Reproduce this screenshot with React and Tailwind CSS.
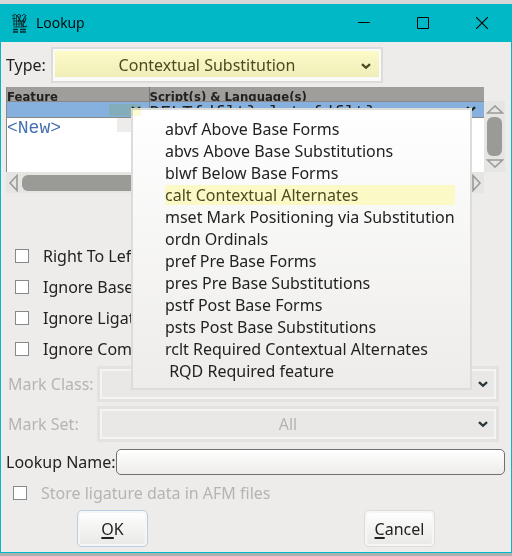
import React, { useState } from "react";

const features = [
  "abvf Above Base Forms",
  "abvs Above Base Substitutions",
  "blwf Below Base Forms",
  "calt Contextual Alternates",
  "mset Mark Positioning via Substitution",
  "ordn Ordinals",
  "pref Pre Base Forms",
  "pres Pre Base Substitutions",
  "pstf Post Base Forms",
  "psts Post Base Substitutions",
  "rclt Required Contextual Alternates",
  "\u00a0RQD Required feature",
];

const flags = [
  "Right To Left",
  "Ignore Base Glyphs",
  "Ignore Ligatures",
  "Ignore Combining Marks",
];

function Chevron({ className = "" }) {
  return (
    <svg viewBox="0 0 10 7" className={`h-[7px] w-[10px] ${className}`} aria-hidden="true">
      <path d="M1 1.2 L5 4.8 L9 1.2" fill="none" stroke="currentColor" strokeWidth="2.3" />
    </svg>
  );
}

function Checkbox({ id, disabled }) {
  return (
    <input
      id={id}
      type="checkbox"
      disabled={disabled}
      className="size-3.5 shrink-0 appearance-none border border-[#85898c] bg-white checked:bg-[#86b0dd]"
    />
  );
}

function DisabledSelect({ id, label, value }) {
  return (
    <div className="flex h-9 items-center pl-[7px] pr-3">
      <label htmlFor={id} className="w-[89px] shrink-0 text-[#b5b4b3]">{label}</label>
      <div className="relative h-full flex-1 border-3 border-[#e3e2e1]">
        <select
          id={id}
          disabled
          className="block size-full appearance-none border-2 border-[#f4f4f3] bg-[#e9e8e7] pr-5 text-center text-[#b5b4b3] opacity-100 [text-align-last:center]"
        >
          <option>{value}</option>
        </select>
        <Chevron className="pointer-events-none absolute right-2 top-3 text-[#2b343a]" />
      </div>
    </div>
  );
}

function AppIcon() {
  return (
    <svg viewBox="0 0 18 20" className="h-5 w-[18px]" fill="none" stroke="#092a2e" aria-hidden="true">
      <path d="M1 3l3-2 2 2 2-2 2 2M11 3l2-2 2 2M1 5.500h5M2 8h12M2 11h11M3 14h10" strokeWidth="0.8" />
      <path d="M3 2v12M5.500 2v12M8 7v7M10.500 9v5M12.500 6v8" strokeWidth="0.8" />
      <path d="M6 2l3 5 2 5q2 3 5 1M10 2l-3 7M15 2l-4 7M15 5q-1 4-2 5" strokeWidth="1.1" />
      <path d="M2 16.500h5M9 16.500h6M2 19h5M9 19h6" strokeWidth="1.3" />
    </svg>
  );
}

function TitleBar() {
  return (
    <header className="flex h-[38px] items-center bg-[#00b8c6] pl-2.5 text-black">
      <AppIcon />
      <h1 className="ml-[7px] flex-1 font-['Open_Sans',sans-serif] text-sm">Lookup</h1>
      <button aria-label="Minimize" className="flex h-full w-[59px] items-center justify-center">
        <svg viewBox="0 0 12 12" className="size-3"><path d="M0 5.5h12" stroke="black" /></svg>
      </button>
      <button aria-label="Maximize" className="flex h-full w-[59px] items-center justify-center">
        <svg viewBox="0 0 12 12" className="size-3"><path d="M.5.5h11v11H.5z" fill="none" stroke="black" /></svg>
      </button>
      <button aria-label="Close" className="flex h-full w-[59px] items-center justify-center">
        <svg viewBox="0 0 12 12" className="size-3"><path d="M0 0l12 12M12 0L0 12" stroke="black" strokeWidth="1.1" /></svg>
      </button>
    </header>
  );
}

function FeatureTable() {
  return (
    <section className="relative mr-1.5 ml-[5px] mt-1 grid grid-cols-[1fr_21px]">
      <div className="h-[85px] border-l border-[#888] bg-white">
        <table className="w-full table-fixed border-collapse">
          <thead>
            <tr className="bg-[#a09e9b] text-left">
              <th className="w-[142px] border-r border-[#777] p-0">
                <div className="h-3.5 overflow-hidden font-['DejaVu_Sans_Condensed','DejaVu_Sans',sans-serif] text-[13px] leading-5">Feature</div>
              </th>
              <th className="p-0">
                <div className="h-3.5 overflow-hidden font-['DejaVu_Sans_Condensed','DejaVu_Sans',sans-serif] text-[13px] leading-5">Script(s) &amp; Language(s)</div>
              </th>
            </tr>
          </thead>
          <tbody className="font-['Liberation_Mono',monospace] text-lg">
            <tr className="border-y border-[#888] bg-[#86b0dd]">
              <td className="border-r border-[#888] p-0">
                <div className="flex h-[15px] items-start justify-end overflow-hidden pr-2 pt-1">
                  <Chevron />
                </div>
              </td>
              <td className="p-0">
                <div className="flex h-[15px] items-start overflow-hidden">
                  <span className="flex-1 leading-[22px]">{"DFLT{dflt},latn{dflt}"}</span>
                  <Chevron className="mr-2 mt-1" />
                </div>
              </td>
            </tr>
            <tr>
              <td className="p-0">
                <div className="flex h-5 items-start">
                  <span className="flex-1 leading-5 text-[#4470b0]">&lt;New&gt;</span>
                  <span className="flex h-3.5 w-8 items-center justify-end bg-[#edecea] pr-2"><Chevron /></span>
                </div>
              </td>
              <td />
            </tr>
          </tbody>
        </table>
      </div>
      <div className="mt-3.5 flex flex-col items-center justify-between bg-[#e5e5e3] py-1">
        <svg viewBox="0 0 18 9" className="h-[9px] w-[18px]"><path d="M1.5 8L9 1l7.500 7z" fill="none" stroke="#9a9b96" strokeWidth="1.6" /></svg>
        <div className="h-[39px] w-[15px] rounded-md bg-[#9a9b96]" />
        <svg viewBox="0 0 18 9" className="h-[9px] w-[18px]"><path d="M1.500 1L9 8l7.500-7z" fill="none" stroke="#9a9b96" strokeWidth="1.6" /></svg>
      </div>
      <div className="flex h-[21px] items-center gap-1 bg-[#e5e5e3] px-[3px]">
        <svg viewBox="0 0 9 18" className="h-[18px] w-[9px]"><path d="M8 1.500L1 9l7 7.500z" fill="none" stroke="#9a9b96" strokeWidth="1.6" /></svg>
        <div className="h-4 flex-1 rounded-md bg-[#9a9b96]" />
        <svg viewBox="0 0 9 18" className="ml-16 h-[18px] w-[9px]"><path d="M1 1.500L8 9l-7 7.500z" fill="none" stroke="#9a9b96" strokeWidth="1.6" /></svg>
      </div>
      <FeatureMenu />
      <span className="pointer-events-none absolute left-[103px] top-[17px] z-20 h-3 w-8 bg-[#fbfac6] opacity-70 mix-blend-multiply" />
    </section>
  );
}

function FeatureMenu() {
  const [chosen, setChosen] = useState(3);
  return (
    <ul role="menu" className="absolute left-[125px] top-[21px] z-10 w-[341px] border-2 border-[#dcdcdb] bg-linear-to-b from-white to-[#edecea] pb-[5px] pl-8 pr-[15px] pt-[9px]">
      {features.map((name, i) => (
        <li key={name} role="none" className="h-[22px]">
          <button
            role="menuitem"
            onClick={() => setChosen(i)}
            className={`block h-5 w-full whitespace-nowrap text-left leading-5 ${i === chosen ? "bg-[#fbfac6] text-[#4c4b20]" : ""}`}
          >
            {name}
          </button>
        </li>
      ))}
    </ul>
  );
}

export default function App() {
  return (
    <div className="bg-linear-to-b from-[#d8d8d8] to-[#b0b0b0] pb-[3px] pt-1 font-['Noto_Sans',sans-serif] text-base text-[#222]">
      <main className="border-x border-b border-[#00b8c6] bg-[#edecea]">
        <TitleBar />
        <form onSubmit={(e) => e.preventDefault()}>
          <div className="mt-[5px] flex h-9 items-center pl-[5px]">
            <label htmlFor="type" className="w-[45px] shrink-0">Type:</label>
            <div className="relative mr-32 h-full flex-1 border-2 border-[#dcdcdb]">
              <select
                id="type"
                className="block size-full appearance-none border-2 border-b-4 border-[#fafafa] bg-linear-to-b from-[#fcfbc8] to-[#efeeb9] pr-5 pt-0.5 text-center text-[#4c4b20] [text-align-last:center]"
              >
                <option>Contextual Substitution</option>
              </select>
              <Chevron className="pointer-events-none absolute right-2.5 top-3.5 text-[#4c4b20]" />
            </div>
          </div>

          <FeatureTable />

          <fieldset className="mt-[47px] pl-3.5">
            {flags.map((flag, i) => (
              <div key={flag} className="flex h-[31px] items-center gap-3.5">
                <Checkbox id={`flag-${i}`} />
                <label htmlFor={`flag-${i}`}>{flag}</label>
              </div>
            ))}
          </fieldset>

          <div className="mt-0.5 flex flex-col gap-1">
            <DisabledSelect id="mark-class" label="Mark Class:" value="All" />
            <DisabledSelect id="mark-set" label="Mark Set:" value="All" />
          </div>

          <div className="mt-[7px] flex items-center pl-[5px] pr-1.5">
            <label htmlFor="lookup-name" className="w-[110px] shrink-0 whitespace-nowrap">Lookup Name:</label>
            <input
              id="lookup-name"
              type="text"
              className="h-[26px] min-w-0 flex-1 rounded-[5px] border border-[#70706e] bg-linear-to-b from-white to-[#edecea] px-2"
            />
          </div>

          <div className="mt-1.5 flex h-6 items-center gap-3.5 pl-3">
            <Checkbox id="afm" disabled />
            <label htmlFor="afm" className="text-[#b5b4b3]">Store ligature data in AFM files</label>
          </div>

          <div className="mt-[5px] flex justify-between pb-[5px] pl-19 pr-19">
            <button type="submit" className="h-[37px] w-[71px] rounded-[5px] border border-[#b9cde8] bg-linear-to-b from-white to-[#e8e8e6] shadow-[inset_0_0_0_2px_#f6f6f5]">
              <span className="underline decoration-2 underline-offset-2">O</span>K
            </button>
            <button type="button" className="h-[37px] w-[71px] rounded-[5px] border border-[#dcdcdb] bg-linear-to-b from-white to-[#e8e8e6] shadow-[inset_0_0_0_2px_#f6f6f5]">
              <span className="underline decoration-2 underline-offset-2">C</span>ancel
            </button>
          </div>
        </form>
      </main>
    </div>
  );
}
